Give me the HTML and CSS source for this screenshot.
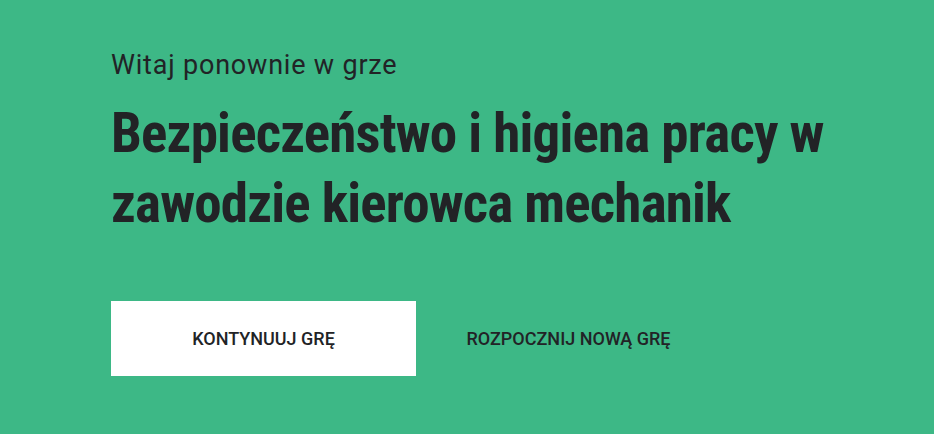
FILE: index.html
```html
<!DOCTYPE html>
<html lang="pl">
<head>
    <meta charset="UTF-8">
    <title>Witaj ponownie w grze</title>
    <link rel="stylesheet" href="styles.css">
</head>
<body>
    <div class="welcome">
        <p class="welcome-sub">Witaj ponownie w grze</p>
        <h1 class="welcome-title">Bezpieczeństwo i higiena pracy w zawodzie kierowca mechanik</h1>
        <div class="actions">
            <button class="btn btn-primary">Kontynuuj grę</button>
            <button class="btn btn-link">Rozpocznij nową grę</button>
        </div>
    </div>
</body>
</html>
```

FILE: styles.css
```css
body {
    margin: 0;
    background-color: #3db886;
    color: #222326;
    font-family: Roboto, "Noto Sans", sans-serif;
}
.welcome {
    padding: 49px 40px 0 111px;
}
.welcome-sub {
    margin: 0;
    font-size: 27px;
    line-height: 32px;
    letter-spacing: 0.8px;
}
.welcome-title {
    margin: 17px 0 0;
    max-width: 740px;
    font-family: "Roboto Condensed", "Open Sans", sans-serif;
    font-weight: bold;
    font-size: 55px;
    line-height: 70px;
    letter-spacing: -0.8px;
}
.actions {
    display: flex;
    margin-top: 63px;
}
.btn {
    width: 305px;
    height: 75px;
    padding: 0;
    border: none;
    font-family: Roboto, sans-serif;
    font-size: 18px;
    font-weight: 500;
    text-transform: uppercase;
    color: #222326;
    cursor: pointer;
}
.btn-primary {
    background-color: #fff;
}
.btn-link {
    background-color: transparent;
}
```
